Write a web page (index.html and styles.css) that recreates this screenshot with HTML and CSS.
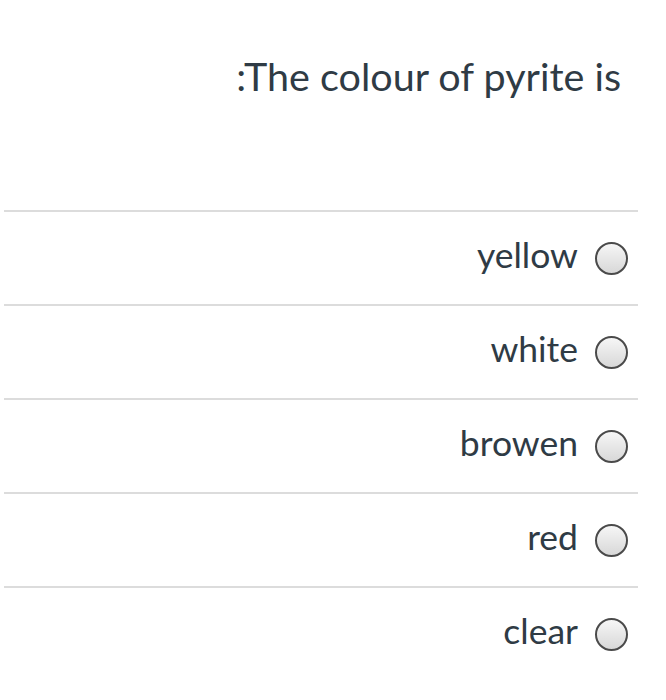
FILE: index.html
```html
<!DOCTYPE html>
<html>
<head>
<meta charset="utf-8">
<link rel="stylesheet" href="styles.css">
</head>
<body>
<div class="quiz">
  <div class="question">:The colour of pyrite is</div>
  <ul class="answers">
    <li class="answer"><span class="label">yellow</span><span class="radio"></span></li>
    <li class="answer"><span class="label">white</span><span class="radio"></span></li>
    <li class="answer"><span class="label">browen</span><span class="radio"></span></li>
    <li class="answer"><span class="label">red</span><span class="radio"></span></li>
    <li class="answer"><span class="label">clear</span><span class="radio"></span></li>
  </ul>
</div>
</body>
</html>
```
FILE: styles.css
```css
html, body {
  margin: 0;
  padding: 0;
  background: #fff;
}
body {
  font-family: Lato, "Noto Sans", sans-serif;
  color: #2f3b45;
}
.quiz {
  width: 634px;
  margin-left: 4px;
}
.question {
  height: 210px;
  box-sizing: border-box;
  padding-top: 49px;
  padding-right: 17px;
  text-align: right;
  font-size: 39.5px;
  line-height: 54px;
}
.answers {
  list-style: none;
  margin: 0;
  padding: 0;
}
.answer {
  border-top: 2px solid #dcdcdc;
  height: 92px;
  display: flex;
  align-items: center;
  justify-content: flex-end;
  padding-right: 10px;
  font-size: 35.5px;
}
.label {
  margin-right: 17px;
  margin-bottom: 8px;
}
.radio {
  width: 29px;
  height: 29px;
  border: 2.5px solid #4a4a4a;
  border-radius: 50%;
  background: linear-gradient(#f6f6f6, #d8d8d8);
}
```
